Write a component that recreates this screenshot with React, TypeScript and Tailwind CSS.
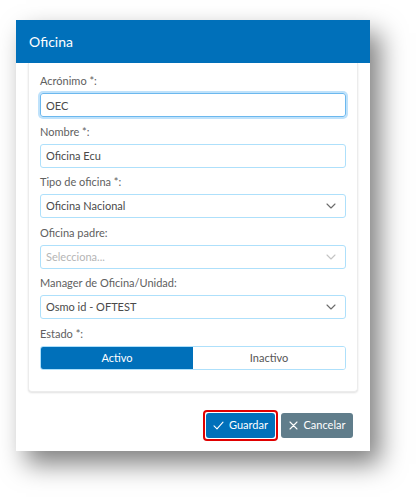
import React, { useState } from 'react';

const font = { fontFamily: 'Lato, "Open Sans", sans-serif' };

const Chevron: React.FC<{ light?: boolean }> = ({ light }) => (
  <svg width="10" height="6" viewBox="0 0 10 6" className={light ? 'text-[#c4c4c4]' : 'text-[#6b6b6b]'}>
    <path d="M1 1l4 4 4-4" fill="none" stroke="currentColor" strokeWidth="1.1" strokeLinecap="round" strokeLinejoin="round" />
  </svg>
);

const Field: React.FC<{ label: string; children: React.ReactNode }> = ({ label, children }) => (
  <div className="flex flex-col">
    <label className="text-[11px] leading-[16px] text-[#606060] mb-[4px]">{label}</label>
    {children}
  </div>
);

const Select: React.FC<{ value: string; placeholder?: boolean }> = ({ value, placeholder }) => (
  <div className="h-[24px] flex items-center justify-between rounded-[3px] border border-[#aee0fb] bg-white pl-[5px] pr-[9px]">
    <span className={`text-[11px] ${placeholder ? 'text-[#b5b5b5]' : 'text-[#4a4a4a]'}`}>{value}</span>
    <Chevron light={placeholder} />
  </div>
);

export default function App() {
  const [estado, setEstado] = useState<'activo' | 'inactivo'>('activo');

  return (
    <div className="w-[420px] h-[497px] bg-white pt-[20px] pl-[16px]" style={font}>
      <div className="w-[354px] bg-white shadow-[10px_13px_24px_rgba(0,0,0,0.5)]">
        <div className="h-[43px] bg-[#0070ba] flex items-center pl-[13px]">
          <span className="text-white text-[14px]">Oficina</span>
        </div>

        <div className="px-[12px]">
          <div className="bg-white rounded-b-[4px] border border-t-0 border-[#ececec] shadow-[0_1px_2px_rgba(0,0,0,0.12)] pt-[10px] pb-[21px] px-[11px] flex flex-col gap-[6.6px]">
            <Field label="Acrónimo *:">
              <input
                defaultValue="OEC"
                className="h-[24px] rounded-[3px] border border-[#6cb8ee] ring-2 ring-[#bfe2fb] pl-[5px] text-[11px] text-[#4a4a4a] outline-none"
                style={font}
              />
            </Field>
            <Field label="Nombre *:">
              <input
                defaultValue="Oficina Ecu"
                className="h-[24px] rounded-[3px] border border-[#aee0fb] pl-[5px] text-[11px] text-[#4a4a4a] outline-none"
                style={font}
              />
            </Field>
            <Field label="Tipo de oficina *:">
              <Select value="Oficina Nacional" />
            </Field>
            <Field label="Oficina padre:">
              <Select value="Selecciona..." placeholder />
            </Field>
            <Field label="Manager de Oficina/Unidad:">
              <Select value="Osmo id - OFTEST" />
            </Field>
            <Field label="Estado *:">
              <div className="h-[24px] grid grid-cols-2 rounded-[3px] border border-[#aee0fb] overflow-hidden">
                <button
                  onClick={() => setEstado('activo')}
                  className={`text-[11px] ${estado === 'activo' ? 'bg-[#0070ba] text-white' : 'bg-white text-[#555]'}`}
                >
                  Activo
                </button>
                <button
                  onClick={() => setEstado('inactivo')}
                  className={`text-[11px] ${estado === 'inactivo' ? 'bg-[#0070ba] text-white' : 'bg-white text-[#555]'}`}
                >
                  Inactivo
                </button>
              </div>
            </Field>
          </div>
        </div>

        <div className="flex justify-end gap-[3px] pr-[17px] pt-[18px] pb-[10px]">
          <div className="rounded-[4px] border-2 border-[#e00000] p-[1px]">
            <button className="h-[25px] w-[69px] rounded-[3px] bg-[#0070ba] text-white text-[11px] flex items-center justify-center gap-[5px]">
              <svg width="11" height="9" viewBox="0 0 11 9">
                <path d="M1 4.8l3 3 6-6.6" fill="none" stroke="white" strokeWidth="1.1" strokeLinecap="round" strokeLinejoin="round" />
              </svg>
              Guardar
            </button>
          </div>
          <button className="mt-[3px] h-[25px] w-[72px] rounded-[3px] bg-[#607d8b] text-white text-[11px] flex items-center justify-center gap-[6px]">
            <svg width="9" height="9" viewBox="0 0 9 9">
              <path d="M1 1l7 7M8 1l-7 7" stroke="white" strokeWidth="1.1" strokeLinecap="round" />
            </svg>
            Cancelar
          </button>
        </div>
      </div>
    </div>
  );
}
